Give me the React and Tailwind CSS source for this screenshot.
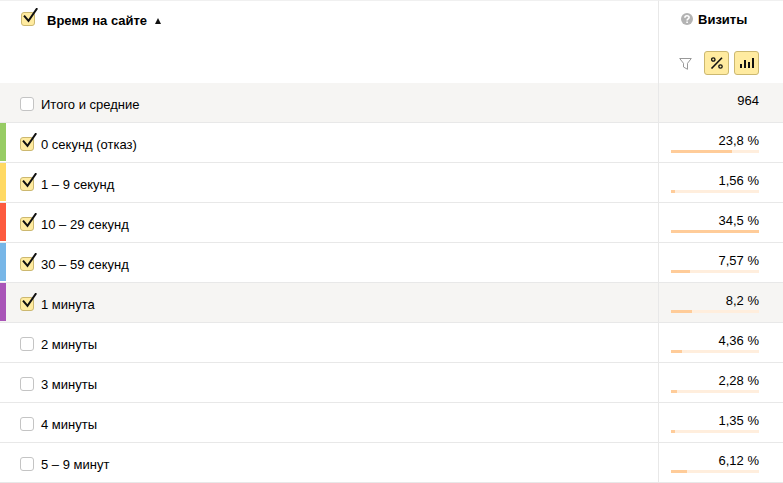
import { useState } from "react";

const MAX_SHARE = 34.5;

const ROWS = [
  { id: "total", label: "Итого и средние", value: "964", shaded: true },
  { id: "s0", label: "0 секунд (отказ)", value: "23,8 %", share: 23.8, stripe: "bg-[#97cc64]", checked: true },
  { id: "s1", label: "1 – 9 секунд", value: "1,56 %", share: 1.56, stripe: "bg-[#ffd963]", checked: true },
  { id: "s10", label: "10 – 29 секунд", value: "34,5 %", share: 34.5, stripe: "bg-[#fd5a3e]", checked: true },
  { id: "s30", label: "30 – 59 секунд", value: "7,57 %", share: 7.57, stripe: "bg-[#77b6e7]", checked: true },
  { id: "m1", label: "1 минута", value: "8,2 %", share: 8.2, stripe: "bg-[#a955b8]", checked: true, shaded: true },
  { id: "m2", label: "2 минуты", value: "4,36 %", share: 4.36 },
  { id: "m3", label: "3 минуты", value: "2,28 %", share: 2.28 },
  { id: "m4", label: "4 минуты", value: "1,35 %", share: 1.35 },
  { id: "m5", label: "5 – 9 минут", value: "6,12 %", share: 6.12 },
];

function Checkbox({ id, defaultChecked = false, label }) {
  const [checked, setChecked] = useState(defaultChecked);
  return (
    <span className="relative block size-3.5 shrink-0">
      <input
        id={id}
        type="checkbox"
        aria-label={label}
        checked={checked}
        onChange={(e) => setChecked(e.target.checked)}
        className="block size-3.5 appearance-none rounded-[3px] border border-[#c4c4c4] bg-white checked:border-[#ccb870] checked:bg-[#ffeba0]"
      />
      {checked && (
        <svg
          className="pointer-events-none absolute -top-1 left-0 h-[18px] w-[18px]"
          viewBox="0 0 18 18"
          fill="none"
          aria-hidden="true"
        >
          <path d="M3 7.6 7.5 12.8 16.2 0.2" stroke="#111" strokeWidth="2" />
        </svg>
      )}
    </span>
  );
}

function ShareBar({ share }) {
  const width = Math.max(4, Math.round((share / MAX_SHARE) * 88));
  return (
    <div className="mt-px h-[3px] w-full bg-[#ffeedd]">
      <div className="h-full bg-[#ffcc99]" style={{ width: `${width}px` }} />
    </div>
  );
}

function Row({ row }) {
  return (
    <tr className={row.shaded ? "bg-[#f6f5f3]" : "bg-white"}>
      <td className="h-10 border-b border-[#e8e8e8] p-0 align-top">
        <div className="flex items-start">
          <span className={`h-[38px] w-1.5 ${row.stripe || ""}`} />
          <div className="flex items-start gap-[7px] pt-3.5 pl-3.5">
            <Checkbox id={row.id} defaultChecked={row.checked} />
            <label htmlFor={row.id} className="leading-4">
              {row.label}
            </label>
          </div>
        </div>
      </td>
      <td className="h-10 border-b border-l border-[#e8e8e8] py-0 pr-6 pl-3 align-top">
        <div className="pt-2.5 text-right leading-4">{row.value}</div>
        {row.share !== undefined && <ShareBar share={row.share} />}
      </td>
    </tr>
  );
}

function ToolButton({ label, children }) {
  return (
    <button
      type="button"
      aria-label={label}
      className="flex h-6 w-[25px] items-center justify-center rounded-[3px] border border-[#ccb870] bg-[#ffeba0]"
    >
      {children}
    </button>
  );
}

export default function App() {
  return (
    <table className="w-full table-fixed border-separate border-spacing-0 bg-white font-['Liberation_Sans',Arial,sans-serif] text-[13px] text-black">
      <colgroup>
        <col />
        <col className="w-[125px]" />
      </colgroup>
      <thead>
        <tr>
          <th className="h-[83px] border-t border-[#f0f0f0] p-0 text-left align-top font-bold">
            <div className="flex items-start gap-3 pt-[11px] pl-[21px]">
              <Checkbox label="Выбрать все" defaultChecked />
              <button type="button" className="flex items-center gap-2 leading-[18px] font-bold">
                Время на сайте
                <svg className="h-1.5 w-1.5" viewBox="0 0 6 6" aria-hidden="true">
                  <path d="M3 0 6 6H0z" fill="#111" />
                </svg>
              </button>
            </div>
          </th>
          <th className="h-[83px] border-t border-l border-t-[#f0f0f0] border-l-[#e8e8e8] p-0 text-left align-top font-bold">
            <div className="flex items-start gap-[5px] pt-3 pl-[22px] leading-[14px]">
              <button type="button" aria-label="Справка" className="block size-3">
                <svg className="size-3" viewBox="0 0 12 12" fill="none" aria-hidden="true">
                  <circle cx="6" cy="6" r="6" fill="#b3b3b3" />
                  <path
                    d="M3.9 4.7C3.9 2.2 8.1 2.2 8.1 4.5 8.1 5.9 6.1 5.8 6.1 7.4M6.1 8.4v1.6"
                    stroke="#fff"
                    strokeWidth="1.6"
                  />
                </svg>
              </button>
              Визиты
            </div>
            <div className="flex items-center pt-6 pl-5">
              <button type="button" aria-label="Фильтр" className="mr-3 block h-3.5 w-[13px]">
                <svg className="h-3.5 w-[13px]" viewBox="0 0 13 14" fill="none" aria-hidden="true">
                  <path
                    d="M0.7 2.5h11.6L8.5 7.3v6L4.5 11V7.3L0.7 2.5z"
                    stroke="#999"
                    strokeWidth="1"
                    strokeLinejoin="round"
                  />
                </svg>
              </button>
              <div className="flex gap-[5px]">
                <ToolButton label="Проценты">
                  <svg className="h-3 w-[13px]" viewBox="0 0 13 12" fill="none" stroke="#111" aria-hidden="true">
                    <circle cx="3.3" cy="2.5" r="1.7" strokeWidth="1.3" />
                    <circle cx="10.5" cy="9.5" r="1.7" strokeWidth="1.3" />
                    <path d="M1.5 11.5 12 0.7" strokeWidth="1.6" />
                  </svg>
                </ToolButton>
                <ToolButton label="Столбцы">
                  <svg className="h-2.5 w-[15px]" viewBox="0 0 15 10" fill="#111" aria-hidden="true">
                    <path d="M1 6h2v4H1zM5 2h2v8H5zM9 4h2v6H9zM13 0h2v10h-2z" />
                  </svg>
                </ToolButton>
              </div>
            </div>
          </th>
        </tr>
      </thead>
      <tbody>
        {ROWS.map((row) => (
          <Row key={row.id} row={row} />
        ))}
      </tbody>
    </table>
  );
}
